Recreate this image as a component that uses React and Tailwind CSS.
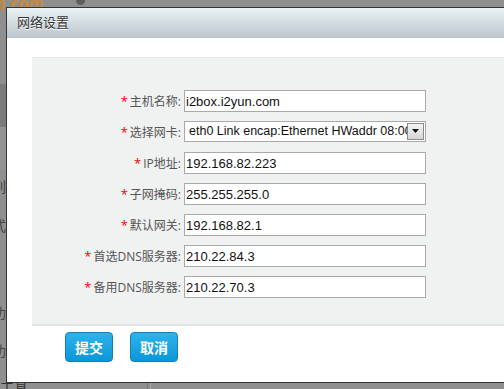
import React from 'react';

const fields = [
  { label: '主机名称:', value: 'i2box.i2yun.com' },
  { label: '选择网卡:', value: 'eth0 Link encap:Ethernet HWaddr 08:00:27:3A:5C:9E', select: true },
  { label: 'IP地址:', value: '192.168.82.223' },
  { label: '子网掩码:', value: '255.255.255.0' },
  { label: '默认网关:', value: '192.168.82.1' },
  { label: '首选DNS服务器:', value: '210.22.84.3' },
  { label: '备用DNS服务器:', value: '210.22.70.3' },
];

const valueFont = { fontFamily: '"Liberation Sans", "Noto Sans CJK SC", sans-serif' };

function Field({ label, value, select }) {
  return (
    <div className="flex items-center h-[22px]">
      <div className="w-[152px] pr-[3px] text-right text-[12px] leading-none text-[#555] whitespace-nowrap">
        <span className="text-[#e00] text-[13px] mr-[2px]">*</span>
        {label}
      </div>
      {select ? (
        <div className="w-[242px] h-[21px] mt-[-2px] border border-[#a9a9a9] bg-white flex items-center overflow-hidden">
          <div className="flex-1 overflow-hidden whitespace-nowrap pl-[4px] text-[12.5px] leading-none text-[#111]" style={valueFont}>{value}</div>
          <div className="w-[17px] h-[17px] mr-[1px] border border-[#8c8c8c] bg-gradient-to-b from-[#f4f4f4] to-[#d6d6d6] flex items-center justify-center">
            <svg width="7" height="4" viewBox="0 0 7 4"><path d="M0 0h7L3.5 4z" fill="#111" /></svg>
          </div>
        </div>
      ) : (
        <div className="w-[242px] h-[22px] border border-[#a9a9a9] bg-white flex items-center pl-[1px] text-[13px] leading-none text-[#111] whitespace-nowrap overflow-hidden" style={valueFont}>
          {value}
        </div>
      )}
    </div>
  );
}

export default function App() {
  return (
    <div
      className="relative w-[504px] h-[389px] overflow-hidden bg-[#8f8f8f]"
      style={{ fontFamily: '"Open Sans", "Noto Sans CJK SC", sans-serif' }}
    >
      {/* backdrop fragments behind the overlay */}
      <div className="absolute left-[-24px] top-[-9px] text-[17px] font-bold italic text-[#c8893a]">yun.com</div>
      <div className="absolute left-[76px] top-[-4px] w-[9px] h-[9px] rounded-full bg-[#5e5e5e]" />
      <div className="absolute left-0 top-[84px] w-[6px] h-[43px] bg-[#7b7b7b]" />
      <div className="absolute left-0 top-[127px] w-[6px] h-[43px] bg-[#939393]" />
      <div className="absolute left-[-8px] top-[176px] text-[14px] text-[#444]">列</div>
      <div className="absolute left-[-8px] top-[215px] text-[14px] text-[#444]">式</div>
      <div className="absolute left-[-8px] top-[302px] text-[14px] text-[#444]">功</div>
      <div className="absolute left-[-8px] top-[340px] text-[14px] text-[#444]">功</div>
      <div className="absolute left-0 top-[381px] text-[14px] leading-none text-[#333]">工具</div>
      <div className="absolute left-[147px] top-[383px] w-px h-[6px] bg-[#7a7a7a]" />
      <div className="absolute left-[150px] top-[383px] w-px h-[6px] bg-[#a5a5a5]" />

      {/* dialog window */}
      <div className="absolute left-[6px] top-[7px] w-[560px] h-[376px] border border-[#353535] bg-white flex flex-col">
        <div className="h-[30px] shrink-0 bg-gradient-to-b from-[#eaf4f6] to-[#bcc5cc] flex items-center pl-[10px]">
          <span className="text-[13px] text-[#333] [text-shadow:0_1px_0_#fff]">网络设置</span>
        </div>
        <div className="pl-[25px] pt-[19px]">
          <div className="h-[269px] bg-[#f0f1f1] border-t border-[#e5e9eb] border-b-2 border-b-[#e2e4e3] pt-[32px] flex flex-col gap-[9px]">
            {fields.map((f) => (
              <Field key={f.label} {...f} />
            ))}
          </div>
          <div className="flex gap-[17px] pl-[33px] pt-[6px]">
            <button className="w-[48px] h-[30px] rounded-[4px] border border-[#1b7cb4] bg-gradient-to-b from-[#2db3ea] to-[#0897d9] text-white text-[14px] font-semibold">提交</button>
            <button className="w-[48px] h-[30px] rounded-[4px] border border-[#1b7cb4] bg-gradient-to-b from-[#2db3ea] to-[#0897d9] text-white text-[14px] font-semibold">取消</button>
          </div>
        </div>
      </div>
    </div>
  );
}
